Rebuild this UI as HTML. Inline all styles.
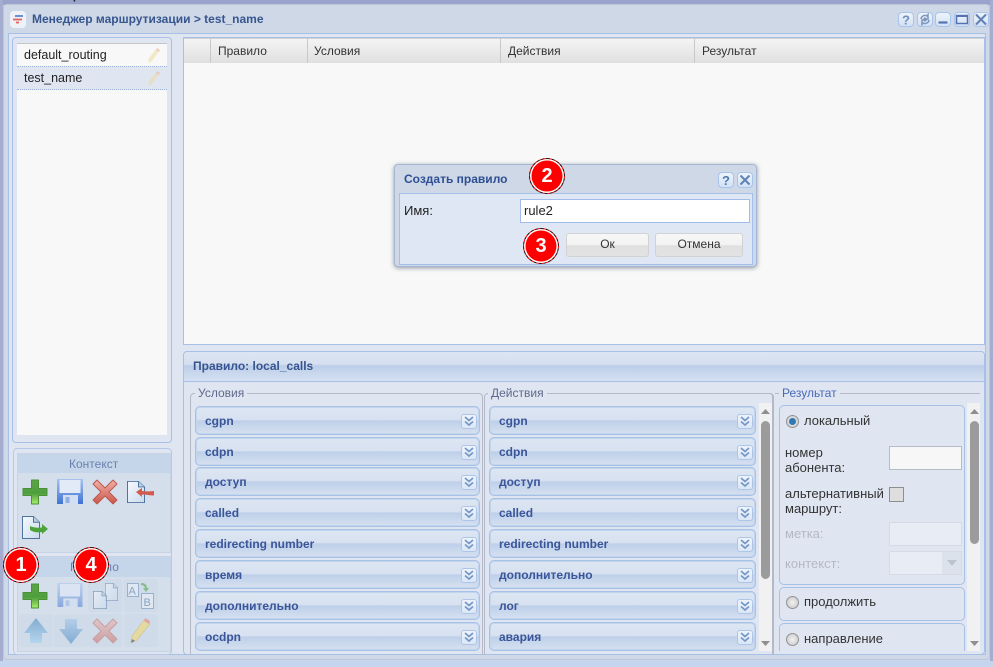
<!DOCTYPE html>
<html lang="ru"><head><meta charset="utf-8"><title>Менеджер маршрутизации</title>
<style>
html,body{margin:0;padding:0}
body{width:993px;height:667px;overflow:hidden;position:relative;background:#c9d6ec;font-family:"Liberation Sans",sans-serif;font-size:13px;color:#222}
.a{position:absolute;box-sizing:border-box}
.t{position:absolute;white-space:nowrap;line-height:16px}
.bar{position:absolute;box-sizing:border-box;height:29px;border:1px solid #a8c1e6;box-shadow:inset 0 0 0 1px #c3d4ed;border-radius:5px;background:linear-gradient(#dde6f2 0,#d7e1f0 47%,#bdcfe9 52%,#c7d6ec 70%,#d6e1f0 100%);font-weight:bold;font-size:12px;color:#3a5599;line-height:28px;padding-left:9px}
.bar:after{content:"";position:absolute;right:2px;top:7px;width:16px;height:15px;box-sizing:border-box;border:1px solid #aec5e8;border-radius:3px;background:linear-gradient(#eef4fc,#dbe7f6)}
.bar svg{position:absolute;right:4px;top:8px;z-index:2}
.hbtn{position:absolute;top:12px;width:16px;height:15px;box-sizing:border-box;border:1px solid #a9c4ea;border-radius:4px;background:linear-gradient(#eef4fc,#d2e1f5)}
.hbtn svg,.dbtn svg{position:absolute;left:0;top:0}
.dbtn{position:absolute;top:172px;width:16px;height:16px;box-sizing:border-box;border:1px solid #a9c4ea;border-radius:4px;background:linear-gradient(#eef4fc,#d2e1f5)}
.badge{position:absolute;box-sizing:border-box;width:36px;height:36px;border-radius:50%;background:#f00;border:1px dashed #111;box-shadow:inset 0 0 0 1.5px #fff;color:#fff;font-weight:bold;font-size:20px;line-height:34px;text-align:center;z-index:20}
.btn{position:absolute;top:233px;height:24px;box-sizing:border-box;border:1px solid #d2d2d2;border-radius:3px;background:linear-gradient(#f7f7f7 0,#f2f2f2 50%,#e0e0e0 52%,#e2e2e2 100%);text-align:center;font-size:12px;line-height:21px;color:#333}
.ic{position:absolute}
.leg{position:absolute;top:386px;font-size:12px;line-height:14px;background:#dfe6f2;padding:0 3px}
.rb{position:absolute;left:786px;width:13px;height:13px;border-radius:50%;border:1px solid #939393;box-sizing:border-box;background:radial-gradient(#f2f2f2,#c4c4c4)}
.sb{position:absolute;width:13px;background:#f1f1f1}
.thumb{position:absolute;width:9px;border-radius:5px;background:#9b9b9b}
.tile{position:absolute;width:34px;height:33px;background:#d0dbe9;border-radius:3px}
</style></head><body>
<svg width="0" height="0" style="position:absolute">
<defs>
<linearGradient id="gp" x1="0" y1="0" x2="0" y2="1"><stop offset="0" stop-color="#5ba648"/><stop offset=".55" stop-color="#4f9e3e"/><stop offset="1" stop-color="#a6ef6a"/></linearGradient>
<linearGradient id="gs" x1="0" y1="0" x2="0" y2="1"><stop offset="0" stop-color="#a8c2ec"/><stop offset="1" stop-color="#3f73d4"/></linearGradient>
<linearGradient id="gx" x1="0" y1="0" x2="0" y2="1"><stop offset="0" stop-color="#f2b0a8"/><stop offset="1" stop-color="#c9564a"/></linearGradient>
<linearGradient id="gu" x1="0" y1="0" x2="0" y2="1"><stop offset="0" stop-color="#4f8dc4"/><stop offset="1" stop-color="#a3d2f0"/></linearGradient>
<linearGradient id="gd" x1="0" y1="0" x2="0" y2="1"><stop offset="0" stop-color="#a3c6e8"/><stop offset="1" stop-color="#4f8dc4"/></linearGradient>
<linearGradient id="gdoc" x1="0" y1="0" x2="1" y2="1"><stop offset="0" stop-color="#f6f9fd"/><stop offset="1" stop-color="#c9dbee"/></linearGradient>
<symbol id="plus" viewBox="0 0 26 26"><path d="M9.500 1h7v8.500H25v7h-8.500V25h-7v-8.500H1v-7h8.500z" fill="url(#gp)" stroke="#4a9139" stroke-width="1" stroke-linejoin="round"/></symbol>
<symbol id="save" viewBox="0 0 26 26"><path d="M0 0h26v25H0z" fill="url(#gs)"/><path d="M2.500 1h21v13h-21z" fill="#e2eaf8"/><path d="M6 16h15v9H6z" fill="#d2def3"/><path d="M8.500 18h4v6h-4z" fill="#8eaee0"/></symbol>
<symbol id="x" viewBox="0 0 26 26"><path d="M5 1l8 8 8-8 4 4-8 8 8 8-4 4-8-8-8 8-4-4 8-8-8-8z" fill="url(#gx)" stroke="#bd5a4c" stroke-width="1" stroke-linejoin="round"/></symbol>
<symbol id="doc" viewBox="0 0 18 24" preserveAspectRatio="none"><path d="M.5.5h11l6 6v17H.5z" fill="url(#gdoc)" stroke="#4f759f"/><path d="M11.500.5v6h6" fill="#b9cfe6" stroke="#4f759f"/></symbol>
<symbol id="up" viewBox="0 0 24 26"><path d="M12 0l12 15h-6v10H6V15H0z" fill="url(#gu)"/></symbol>
<symbol id="dn" viewBox="0 0 24 26"><path d="M6 0h12v10h6L12 25 0 10h6z" fill="url(#gd)"/></symbol>
<symbol id="chev" viewBox="0 0 12 12"><path d="M2 2l4 3.500 4-3.500M2 6.500l4 3.500 4-3.500" fill="none" stroke="#7396c6" stroke-width="1.7"/></symbol>
</defs></svg>

<!-- backdrop -->
<div class="a" style="left:0;top:0;width:993px;height:5px;background:#9aa3cc"></div>
<div class="a" style="left:0;top:0;width:3px;height:667px;background:#a4adcf"></div>
<div class="a" style="left:990px;top:0;width:3px;height:667px;background:#a4adcf"></div>
<div class="t" style="left:32px;top:-13px;font-size:13px;font-weight:bold;color:#222">Совещания</div>

<!-- main window -->
<div class="a" style="left:3px;top:4px;width:987px;height:656px;background:#ced8e6;border:1px solid #bcc8da;border-radius:4px"></div>
<div class="a" style="left:8px;top:33px;width:978px;height:622px;background:#dfe6f2;border:1px solid #a7c0e6"></div>

<div class="a" style="left:10px;top:11px;width:16px;height:17px;background:#eef2f8;border-radius:4px"></div>
<svg class="ic" style="left:12px;top:14px" width="12" height="11" viewBox="0 0 12 11"><path d="M3 2h8" stroke="#5a84d2" stroke-width="1.8"/><path d="M1 5.500h9" stroke="#e4655c" stroke-width="1.8"/><path d="M4 8.500h3" stroke="#e4655c" stroke-width="1.8"/></svg>
<div class="t" style="left:32px;top:11px;font-size:12px;font-weight:bold;color:#37558f">Менеджер маршрутизации &gt; test_name</div>

<div class="hbtn" style="left:898px"><svg width="14" height="13" viewBox="0 0 14 13"><text x="7" y="11.500" text-anchor="middle" font-family="Liberation Sans" font-size="13" font-weight="bold" fill="#6f8fb8">?</text></svg></div>
<div class="hbtn" style="left:917px"><svg width="14" height="13" viewBox="0 0 14 13"><path d="M3 6a4 4 0 0 1 6-3l1-1.500V6H6l1.500-1.500M11 7a4 4 0 0 1-6 3l-1 1.500V7h4L6.500 8.500" fill="none" stroke="#7b97bb" stroke-width="1.5"/></svg></div>
<div class="hbtn" style="left:935px"><svg width="14" height="13" viewBox="0 0 14 13"><path d="M2.500 9.500h9" stroke="#5672b0" stroke-width="2.200"/></svg></div>
<div class="hbtn" style="left:954px"><svg width="14" height="13" viewBox="0 0 14 13"><path d="M1.500 2.500h11v8h-11z" fill="none" stroke="#5672b0" stroke-width="1.600"/><path d="M1 3h12" stroke="#5672b0" stroke-width="2"/></svg></div>
<div class="hbtn" style="left:973px"><svg width="14" height="13" viewBox="0 0 14 13"><path d="M2 1.500l10 10M12 1.500l-10 10" stroke="#6380b5" stroke-width="2"/></svg></div>

<!-- left panel -->
<div class="a" style="left:12px;top:37px;width:160px;height:406px;border:1px solid #a7c0e6;border-radius:4px"></div>
<div class="a" style="left:17px;top:43px;width:150px;height:392px;background:#f8f8f8;border-top:1px solid #c6c6c6"></div>
<div class="a" style="left:17px;top:66px;width:150px;height:24px;background:#dfe6f2;border-top:1px dotted #9fb4dc;border-bottom:1px dotted #9fb4dc"></div>
<div class="t" style="left:24px;top:47px;font-size:12.500px;color:#222">default_routing</div>
<div class="t" style="left:24px;top:70px;font-size:12.500px;color:#222">test_name</div>
<svg class="ic" style="left:147px;top:47px" width="14" height="17" viewBox="0 0 14 17"><path d="M10 1l3 2-8 11-4 2 1-5z" fill="#f1e8c4"/><path d="M10 1l3 2-1 2-3-2z" fill="#eecfc6"/></svg>
<svg class="ic" style="left:147px;top:70px" width="14" height="17" viewBox="0 0 14 17"><path d="M10 1l3 2-8 11-4 2 1-5z" fill="#e6dfc6"/><path d="M10 1l3 2-1 2-3-2z" fill="#e4c9c6"/></svg>

<!-- Контекст -->
<div class="a" style="left:13px;top:448px;width:159px;height:207px;border:1px solid #b6c8e6;border-radius:4px"></div>
<div class="a" style="left:17px;top:453px;width:154px;height:100px;background:#d5dfec;border:1px solid #c6d4e6"></div>
<div class="a" style="left:18px;top:454px;width:152px;height:19px;background:#c6d6ea"></div>
<div class="t" style="left:69px;top:456px;font-size:12px;color:#6b80ae">Контекст</div>
<svg class="ic" style="left:22px;top:479px" width="26" height="26"><use href="#plus"/></svg>
<svg class="ic" style="left:57px;top:479px" width="26" height="26"><use href="#save"/></svg>
<svg class="ic" style="left:92px;top:479px" width="26" height="26"><use href="#x"/></svg>
<svg class="ic" style="left:127px;top:481px" width="18" height="22" viewBox="0 0 18 22"><use href="#doc" width="18" height="22"/></svg>
<svg class="ic" style="left:136px;top:488px" width="18" height="10" viewBox="0 0 18 10"><path d="M6 0L0 4l6 5V6.500c4 0 8 1 12 1V3C14 3.500 10 3.500 6 3z" fill="#d35b4c"/></svg>
<svg class="ic" style="left:22px;top:516px" width="18" height="23" viewBox="0 0 18 23"><use href="#doc" width="18" height="23"/></svg>
<svg class="ic" style="left:30px;top:524px" width="18" height="11" viewBox="0 0 18 11"><path d="M12 0l6 5-6 5V8C7 9 3 8 0 6V2c3 1.500 7 2 12 1.500z" fill="#4da23c"/></svg>

<!-- Правило tools -->
<div class="a" style="left:17px;top:556px;width:154px;height:96px;background:#d5dfec;border:1px solid #c6d4e6"></div>
<div class="a" style="left:18px;top:557px;width:152px;height:20px;background:#c6d6ea"></div>
<div class="t" style="left:70px;top:559px;font-size:12px;color:#6b80ae">Правило</div>
<div class="tile" style="left:88px;top:579px"></div>
<div class="tile" style="left:124px;top:579px"></div>
<div class="tile" style="left:19px;top:614px"></div>
<div class="tile" style="left:54px;top:614px"></div>
<div class="tile" style="left:88px;top:614px"></div>
<div class="tile" style="left:124px;top:614px"></div>
<svg class="ic" style="left:22px;top:583px" width="26" height="26"><use href="#plus"/></svg>
<svg class="ic" style="left:57px;top:583px;opacity:.5" width="26" height="25"><use href="#save"/></svg>
<svg class="ic" style="left:105px;top:583px;opacity:.5" width="13" height="18" viewBox="0 0 13 18"><use href="#doc" width="13" height="18"/></svg>
<svg class="ic" style="left:93px;top:591px;opacity:.6" width="14" height="18" viewBox="0 0 14 18"><use href="#doc" width="14" height="18"/></svg>
<svg class="ic" style="left:127px;top:582px;opacity:.55" width="27" height="27" viewBox="0 0 27 27"><path d="M.5 1.500h11v13H.5z" fill="#eaf1fa" stroke="#6f90b5"/><path d="M14.500 11.500h12V26.500h-12z" fill="#eaf1fa" stroke="#6f90b5"/><text x="1.500" y="12.500" font-family="Liberation Sans" font-size="11" fill="#52779f">A</text><text x="16.500" y="24" font-family="Liberation Sans" font-size="11" fill="#52779f">B</text><path d="M14 1c4 0 6 2 6 5h2l-3 4-3-4h2c0-1.500-2-3-4-3z" fill="#4da23c"/></svg>
<svg class="ic" style="left:24px;top:618px;opacity:.6" width="24" height="26"><use href="#up"/></svg>
<svg class="ic" style="left:59px;top:619px;opacity:.6" width="24" height="26"><use href="#dn"/></svg>
<svg class="ic" style="left:92px;top:618px;opacity:.45" width="26" height="26"><use href="#x"/></svg>
<svg class="ic" style="left:130px;top:617px;opacity:.65" width="21" height="27" viewBox="0 0 21 27"><path d="M14 3l6 4L7 23l-6 3 1-7z" fill="#f0d878" stroke="#c9b56a" stroke-width=".6"/><path d="M15 1l5 3-1 3-5-3z" fill="#e58a80"/><path d="M1 26l1-4 3 2z" fill="#555"/></svg>

<!-- table -->
<div class="a" style="left:183px;top:37px;width:802px;height:308px;background:#f8f8f8;border:1px solid #a7c0e6"></div>
<div class="a" style="left:184px;top:38px;width:800px;height:25px;background:linear-gradient(#f4f4f4,#e0e0e0);border-top:1px solid #d0d0d0"></div>
<div class="a" style="left:210px;top:39px;width:1px;height:24px;background:#c8c8c8"></div>
<div class="a" style="left:307px;top:39px;width:1px;height:24px;background:#c8c8c8"></div>
<div class="a" style="left:500px;top:39px;width:1px;height:24px;background:#c8c8c8"></div>
<div class="a" style="left:694px;top:39px;width:1px;height:24px;background:#c8c8c8"></div>
<div class="t" style="left:218px;top:43px;font-size:12px;color:#333">Правило</div>
<div class="t" style="left:314px;top:43px;font-size:12px;color:#333">Условия</div>
<div class="t" style="left:508px;top:43px;font-size:12px;color:#333">Действия</div>
<div class="t" style="left:702px;top:43px;font-size:12px;color:#333">Результат</div>

<!-- dialog -->
<div class="a" style="left:394px;top:164px;width:363px;height:103px;background:#ced8e6;border:1px solid #a5b7d2;border-radius:4px;box-shadow:0 1px 5px rgba(60,70,90,.55)"></div>
<div class="a" style="left:399px;top:193px;width:354px;height:72px;background:#dfe7f4;border:1px solid #a4c0ea"></div>
<div class="t" style="left:404px;top:171px;font-size:12px;font-weight:bold;color:#2f4f94">Создать правило</div>
<div class="dbtn" style="left:718px"><svg width="14" height="14" viewBox="0 0 14 14"><text x="7" y="12" text-anchor="middle" font-family="Liberation Sans" font-size="13" font-weight="bold" fill="#4f79ad">?</text></svg></div>
<div class="dbtn" style="left:737px"><svg width="14" height="14" viewBox="0 0 14 14"><path d="M2.500 2.500l9 9M11.500 2.500l-9 9" stroke="#5f82b4" stroke-width="2"/></svg></div>
<div class="t" style="left:404px;top:203px;font-size:13px;color:#222">Имя:</div>
<div class="a" style="left:520px;top:199px;width:230px;height:24px;background:#fff;border:1px solid #9fbde8;font-size:13px;line-height:21px;padding-left:3px;color:#222">rule2</div>
<div class="btn" style="left:566px;width:83px">Ок</div>
<div class="btn" style="left:655px;width:88px">Отмена</div>

<!-- rule panel -->
<div class="a" style="left:183px;top:351px;width:802px;height:304px;background:#dfe6f2;border:1px solid #a7c0e6;border-radius:4px"></div>
<div class="a" style="left:184px;top:352px;width:800px;height:30px;background:linear-gradient(#dce5f2 0,#d5dfef 42%,#bccde9 48%,#c7d6ec 70%,#d5e0f1 100%);border-bottom:1px solid #a7c0e6;border-radius:4px 4px 0 0"></div>
<div class="t" style="left:193px;top:358px;font-size:12px;font-weight:bold;color:#37558f">Правило: local_calls</div>

<!-- fieldsets -->
<div class="a" style="left:190px;top:393px;width:293px;height:262px;border:1px solid #b4b9c9;border-bottom:0;border-radius:4px 4px 0 0"></div>
<div class="a" style="left:484px;top:393px;width:290px;height:262px;border:1px solid #b4b9c9;border-bottom:0;border-right:2px solid #b4b9c9;border-radius:4px 4px 0 0"></div>
<div class="a" style="left:775px;top:393px;width:205px;height:1px;background:#b4b9c9"></div>
<div class="leg" style="left:195px;color:#5f6a8a">Условия</div>
<div class="leg" style="left:488px;color:#5f6a8a">Действия</div>
<div class="leg" style="left:779px;color:#4a6bb4">Результат</div>

<!-- left column bars -->
<div class="a" style="left:195px;top:405px;width:285px;height:246px;overflow:hidden">
<div class="bar" style="left:0;top:1px;width:285px">cgpn<svg width="12" height="12"><use href="#chev"/></svg></div>
<div class="bar" style="left:0;top:32px;width:285px">cdpn<svg width="12" height="12"><use href="#chev"/></svg></div>
<div class="bar" style="left:0;top:62px;width:285px">доступ<svg width="12" height="12"><use href="#chev"/></svg></div>
<div class="bar" style="left:0;top:93px;width:285px">called<svg width="12" height="12"><use href="#chev"/></svg></div>
<div class="bar" style="left:0;top:124px;width:285px">redirecting number<svg width="12" height="12"><use href="#chev"/></svg></div>
<div class="bar" style="left:0;top:155px;width:285px">время<svg width="12" height="12"><use href="#chev"/></svg></div>
<div class="bar" style="left:0;top:186px;width:285px">дополнительно<svg width="12" height="12"><use href="#chev"/></svg></div>
<div class="bar" style="left:0;top:217px;width:285px">ocdpn<svg width="12" height="12"><use href="#chev"/></svg></div>
</div>

<!-- middle column bars -->
<div class="a" style="left:489px;top:405px;width:267px;height:246px;overflow:hidden">
<div class="bar" style="left:0;top:1px;width:267px">cgpn<svg width="12" height="12"><use href="#chev"/></svg></div>
<div class="bar" style="left:0;top:32px;width:267px">cdpn<svg width="12" height="12"><use href="#chev"/></svg></div>
<div class="bar" style="left:0;top:62px;width:267px">доступ<svg width="12" height="12"><use href="#chev"/></svg></div>
<div class="bar" style="left:0;top:93px;width:267px">called<svg width="12" height="12"><use href="#chev"/></svg></div>
<div class="bar" style="left:0;top:124px;width:267px">redirecting number<svg width="12" height="12"><use href="#chev"/></svg></div>
<div class="bar" style="left:0;top:155px;width:267px">дополнительно<svg width="12" height="12"><use href="#chev"/></svg></div>
<div class="bar" style="left:0;top:186px;width:267px">лог<svg width="12" height="12"><use href="#chev"/></svg></div>
<div class="bar" style="left:0;top:217px;width:267px">авария<svg width="12" height="12"><use href="#chev"/></svg></div>
</div>

<!-- scrollbars -->
<div class="sb" style="left:759px;top:403px;height:248px"></div>
<div class="thumb" style="left:761px;top:421px;height:158px"></div>
<svg class="ic" style="left:761px;top:409px" width="9" height="6"><path d="M0 5l4.500-5 4.500 5z" fill="#8f8f8f"/></svg>
<svg class="ic" style="left:761px;top:641px" width="9" height="5"><path d="M0 0h9l-4.500 5z" fill="#8f8f8f"/></svg>
<div class="sb" style="left:967px;top:403px;height:248px"></div>
<div class="thumb" style="left:970px;top:421px;height:123px"></div>
<svg class="ic" style="left:970px;top:409px" width="9" height="6"><path d="M0 5l4.500-5 4.500 5z" fill="#8f8f8f"/></svg>
<svg class="ic" style="left:970px;top:641px" width="9" height="5"><path d="M0 0h9l-4.500 5z" fill="#8f8f8f"/></svg>

<!-- result -->
<div class="a" style="left:779px;top:405px;width:186px;height:180px;border:1px solid #a8c0e6;border-radius:5px"></div>
<div class="a" style="left:779px;top:587px;width:186px;height:34px;border:1px solid #a8c0e6;border-radius:5px"></div>
<div class="a" style="left:779px;top:623px;width:186px;height:28px;border:1px solid #a8c0e6;border-bottom:0;border-radius:5px 5px 0 0"></div>
<div class="rb" style="top:415px"></div>
<div class="a" style="left:789px;top:418px;width:7px;height:7px;border-radius:50%;background:#2f78b8"></div>
<div class="t" style="left:804px;top:413px;color:#333">локальный</div>
<div class="t" style="left:785px;top:445px;color:#333;line-height:15px">номер<br>абонента:</div>
<div class="a" style="left:889px;top:446px;width:73px;height:24px;background:#f7f7f7;border:1px solid #b5bcc9"></div>
<div class="t" style="left:785px;top:486px;color:#333;line-height:15px">альтернативный<br>маршрут:</div>
<div class="a" style="left:889px;top:487px;width:15px;height:15px;background:#dedede;border:1px solid #8e8e8e"></div>
<div class="t" style="left:785px;top:526px;color:#b4b8c2">метка:</div>
<div class="a" style="left:889px;top:522px;width:73px;height:24px;background:#e7ecf5;border:1px solid #d5dae4"></div>
<div class="t" style="left:785px;top:556px;color:#b4b8c2">контекст:</div>
<div class="a" style="left:889px;top:551px;width:73px;height:24px;background:#e7ecf5;border:1px solid #d5dae4"></div>
<div class="a" style="left:942px;top:552px;width:19px;height:22px;background:#dce2ec"></div>
<svg class="ic" style="left:947px;top:560px" width="10" height="6"><path d="M0 0h10l-5 6z" fill="#bcc4d2"/></svg>
<div class="rb" style="top:596px"></div>
<div class="t" style="left:804px;top:594px;color:#333">продолжить</div>
<div class="rb" style="top:633px"></div>
<div class="t" style="left:804px;top:631px;color:#333">направление</div>

<!-- bottom strip -->
<div class="a" style="left:0;top:661px;width:993px;height:6px;background:#c6d5ee"></div>

<!-- badges -->
<div class="badge" style="left:3px;top:547px">1</div>
<div class="badge" style="left:73px;top:547px">4</div>
<div class="badge" style="left:529px;top:158px">2</div>
<div class="badge" style="left:523px;top:228px">3</div>
</body></html>
